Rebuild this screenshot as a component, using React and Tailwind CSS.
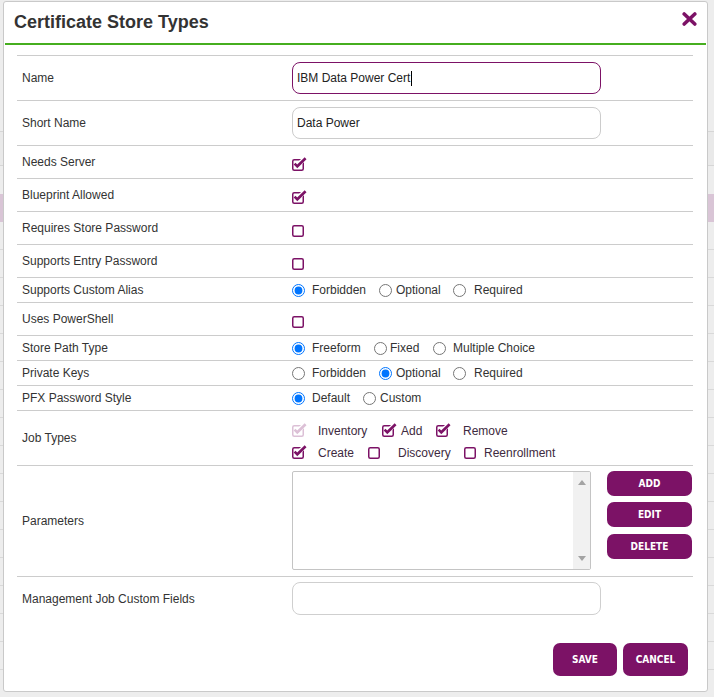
import React from "react";

const PURPLE = "#7c1266";

function Check({ checked, faded }) {
  const c = faded ? "#dcc0d6" : PURPLE;
  return (
    <span className="relative inline-block w-[12px] h-[12px] shrink-0">
      <svg className="absolute left-0 top-[-4px] overflow-visible" width="16" height="16" viewBox="0 0 16 16">
        <rect x="0.75" y="4.75" width="10.5" height="10.5" rx="1.5" fill="white" stroke={c} strokeWidth="1.5" />
        {checked && (
          <>
            <path d="M8 8 L13.6 2.6" stroke="white" strokeWidth="4.5" fill="none" />
            <path d="M2.6 8.6 L5.3 11.3 L13.6 3.2" stroke={c} strokeWidth="2.6" fill="none" />
          </>
        )}
      </svg>
    </span>
  );
}

function Radio({ name, checked }) {
  return <input type="radio" name={name} defaultChecked={checked} className="m-0 w-[13px] h-[13px] shrink-0" />;
}

function Row({ label, className, children }) {
  return (
    <div className={`grid grid-cols-[275px_1fr] items-center border-t border-[#cccccc] ${className}`}>
      <div className="pl-[5px] text-[12px] text-[#333333]">{label}</div>
      <div className="flex items-center">{children}</div>
    </div>
  );
}

function PurpleButton({ children, className }) {
  return (
    <button className={`rounded-[7px] bg-[#7c1266] text-white text-[10px] font-bold font-['DejaVu_Sans_Condensed','DejaVu_Sans',sans-serif] [font-stretch:condensed] flex items-center justify-center ${className}`}>
      {children}
    </button>
  );
}

export default function App() {
  const bgRows = Array.from({ length: 16 });
  return (
    <div className="relative h-[697px] w-[714px] overflow-hidden bg-[#ededed] font-['Liberation_Sans',Arial,sans-serif]">
      {/* page behind the dialog */}
      <div className="flex flex-col">
        <div className="h-[132px] border-b border-[#d6d6d6]" />
        <div className="h-[34px] border-b border-[#d6d6d6] bg-[#e9e9e9]" />
        <div className="h-[28px]" />
        <div className="h-[28px] bg-[#d9c5d6]" />
        {bgRows.map((_, i) => (
          <div key={i} className="h-[28px] border-b border-[#d9d9d9]" />
        ))}
      </div>

      {/* dialog */}
      <div className="absolute left-[3px] top-[1px] flex h-[691px] w-[705px] flex-col rounded-[3px] border border-[#c9c9c9] bg-white">
        <div className="flex h-[41px] items-center justify-between pl-[10px] pr-[10px]">
          <h1 className="text-[18px] font-bold text-[#333333]">Certificate Store Types</h1>
          <svg className="-translate-y-[4px]" width="15" height="14" viewBox="0 0 15 14">
            <path d="M2.2 2 L12.8 12 M12.8 2 L2.2 12" stroke={PURPLE} strokeWidth="3.6" strokeLinecap="round" />
          </svg>
        </div>
        <div className="mx-[1px] h-[2px] bg-[#46ae1f]" />

        <div className="ml-[13px] mr-[14px] mt-[10px]">
          <Row label="Name" className="h-[45px]">
            <div className="flex h-[32px] w-[309px] items-center rounded-[8px] border border-[#7c1266] px-[4px] text-[12px] text-[#222222]">
              IBM Data Power Cert
              <span className="ml-px h-[15px] w-px bg-black" />
            </div>
          </Row>
          <Row label="Short Name" className="h-[45px]">
            <div className="flex h-[32px] w-[309px] items-center rounded-[8px] border border-[#cccccc] px-[4px] text-[12px] text-[#222222]">
              Data Power
            </div>
          </Row>
          <Row label="Needs Server" className="h-[33px]">
            <span className="translate-y-[4px]"><Check checked /></span>
          </Row>
          <Row label="Blueprint Allowed" className="h-[33px]">
            <span className="translate-y-[4px]"><Check checked /></span>
          </Row>
          <Row label="Requires Store Password" className="h-[33px]">
            <span className="translate-y-[4px]"><Check /></span>
          </Row>
          <Row label="Supports Entry Password" className="h-[33px]">
            <span className="translate-y-[4px]"><Check /></span>
          </Row>
          <Row label="Supports Custom Alias" className="h-[25px]">
            <label className="flex w-[87px] items-center text-[12px] text-[#333333]">
              <Radio name="alias" checked />
              <span className="ml-[7px]">Forbidden</span>
            </label>
            <label className="flex w-[74px] items-center text-[12px] text-[#333333]">
              <Radio name="alias" />
              <span className="ml-[4px]">Optional</span>
            </label>
            <label className="flex items-center text-[12px] text-[#333333]">
              <Radio name="alias" />
              <span className="ml-[8px]">Required</span>
            </label>
          </Row>
          <Row label="Uses PowerShell" className="h-[33px]">
            <span className="translate-y-[4px]"><Check /></span>
          </Row>
          <Row label="Store Path Type" className="h-[25px]">
            <label className="flex w-[82px] items-center text-[12px] text-[#333333]">
              <Radio name="path" checked />
              <span className="ml-[7px]">Freeform</span>
            </label>
            <label className="flex w-[59px] items-center text-[12px] text-[#333333]">
              <Radio name="path" />
              <span className="ml-[3px]">Fixed</span>
            </label>
            <label className="flex items-center text-[12px] text-[#333333]">
              <Radio name="path" />
              <span className="ml-[7px]">Multiple Choice</span>
            </label>
          </Row>
          <Row label="Private Keys" className="h-[25px]">
            <label className="flex w-[87px] items-center text-[12px] text-[#333333]">
              <Radio name="keys" />
              <span className="ml-[7px]">Forbidden</span>
            </label>
            <label className="flex w-[74px] items-center text-[12px] text-[#333333]">
              <Radio name="keys" checked />
              <span className="ml-[4px]">Optional</span>
            </label>
            <label className="flex items-center text-[12px] text-[#333333]">
              <Radio name="keys" />
              <span className="ml-[8px]">Required</span>
            </label>
          </Row>
          <Row label="PFX Password Style" className="h-[25px]">
            <label className="flex w-[71px] items-center text-[12px] text-[#333333]">
              <Radio name="pfx" checked />
              <span className="ml-[7px]">Default</span>
            </label>
            <label className="flex items-center text-[12px] text-[#333333]">
              <Radio name="pfx" />
              <span className="ml-[4px]">Custom</span>
            </label>
          </Row>
          <Row label="Job Types" className="h-[55px]">
            <div className="flex flex-col self-start pt-[8px] text-[12px] text-[#3e2a40]">
              <div className="flex h-[22px] items-center">
                <div className="flex w-[90px] items-center">
                  <Check checked faded />
                  <span className="ml-[14px]">Inventory</span>
                </div>
                <div className="flex w-[54px] items-center">
                  <Check checked />
                  <span className="ml-[7px]">Add</span>
                </div>
                <div className="flex items-center">
                  <Check checked />
                  <span className="ml-[15px]">Remove</span>
                </div>
              </div>
              <div className="flex h-[22px] items-center">
                <div className="flex w-[76px] items-center">
                  <Check checked />
                  <span className="ml-[14px]">Create</span>
                </div>
                <div className="flex w-[96px] items-center">
                  <Check />
                  <span className="ml-[18px]">Discovery</span>
                </div>
                <div className="flex items-center">
                  <Check />
                  <span className="ml-[8px]">Reenrollment</span>
                </div>
              </div>
            </div>
          </Row>
          <Row label="Parameters" className="h-[111px]">
            <div className="-mt-[2px] flex items-start">
              <div className="flex h-[99px] w-[299px] justify-end rounded-[2px] border border-[#c4c4c4]">
                <div className="flex w-[17px] flex-col items-center justify-between bg-[#f1f1f1] py-[8px]">
                  <svg width="8" height="5" viewBox="0 0 8 5"><path d="M0 5 L4 0 L8 5 Z" fill="#a3a3a3" /></svg>
                  <svg width="8" height="5" viewBox="0 0 8 5"><path d="M0 0 L8 0 L4 5 Z" fill="#a3a3a3" /></svg>
                </div>
              </div>
              <div className="ml-[16px] flex flex-col gap-[6.5px]">
                <PurpleButton className="h-[25px] w-[85px]">ADD</PurpleButton>
                <PurpleButton className="h-[25px] w-[85px]">EDIT</PurpleButton>
                <PurpleButton className="h-[25px] w-[85px]">DELETE</PurpleButton>
              </div>
            </div>
          </Row>
          <Row label="Management Job Custom Fields" className="pt-[5px]">
            <div className="h-[33px] w-[309px] rounded-[8px] border border-[#cfcfcf]" />
          </Row>
        </div>

        <div className="mr-[19px] mt-[28px] flex justify-end gap-[6px]">
          <PurpleButton className="h-[33px] w-[64px]">SAVE</PurpleButton>
          <PurpleButton className="h-[33px] w-[65px]">CANCEL</PurpleButton>
        </div>
      </div>
    </div>
  );
}
